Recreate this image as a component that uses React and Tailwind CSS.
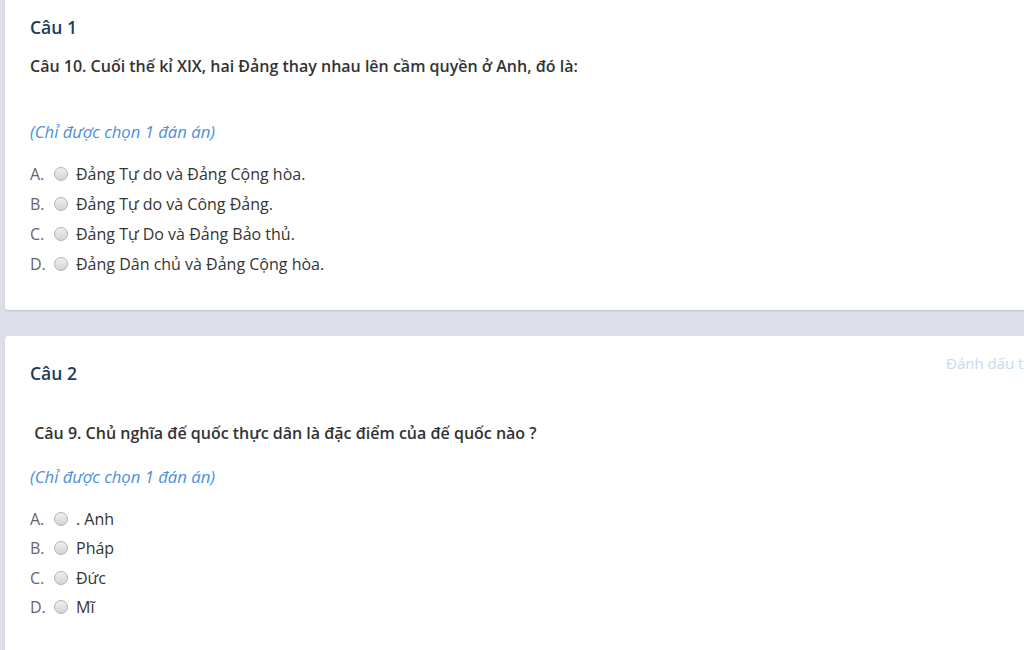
import React from 'react';

const questions = [
    {
        id: 1,
        title: 'Câu 1',
        text: 'Câu 10. Cuối thế kỉ XIX, hai Đảng thay nhau lên cầm quyền ở Anh, đó là:',
        options: [
            'Đảng Tự do và Đảng Cộng hòa.',
            'Đảng Tự do và Công Đảng.',
            'Đảng Tự Do và Đảng Bảo thủ.',
            'Đảng Dân chủ và Đảng Cộng hòa.',
        ],
    },
    {
        id: 2,
        title: 'Câu 2',
        text: '\u00a0Câu 9. Chủ nghĩa đế quốc thực dân là đặc điểm của đế quốc nào ?',
        options: ['. Anh', 'Pháp', 'Đức', 'Mĩ'],
        flag: true,
    },
];

const letters = ['A.', 'B.', 'C.', 'D.'];

const Radio = () => (
    <span className="inline-block w-[14px] h-[14px] rounded-full border border-[#b3b3b3] bg-gradient-to-b from-[#f0f0f0] to-[#d4d4d4] shrink-0" />
);

const Option = ({ letter, label, tall }) => (
    <div className={`flex items-center text-[16px] ${tall ? 'h-[30px]' : 'h-[29.5px]'}`}>
        <span className="w-[24px] text-[#666]">{letter}</span>
        <Radio />
        <span className="ml-[8px] text-[#353535]">{label}</span>
    </div>
);

const QuestionCard = ({ q, first }) => (
    <div
        className={`relative w-[1100px] bg-white shadow-[0_1px_2px_rgba(120,130,150,0.35)] pl-[25px] ${
            first ? 'pt-[14px] pb-[31px] rounded-b-[3px]' : 'pt-[24px] pb-[40px] rounded-[3px]'
        }`}
    >
        {q.flag && (
            <span className="absolute left-[941px] top-[16px] text-[15px] leading-[22px] text-[#c6daef]">
                Đánh dấu theo dõi
            </span>
        )}
        <div className="text-[17.5px] leading-[26px] font-semibold text-[#1e3a5c]">{q.title}</div>
        <div
            className={`text-[16px] leading-[22px] font-semibold text-[#333] ${first ? 'mt-[15px]' : 'mt-[36px]'}`}
        >
            {q.text}
        </div>
        <div
            className={`text-[16.7px] leading-[22px] italic text-[#4a8fe0] ${first ? 'mt-[44px]' : 'mt-[22px]'}`}
        >
            (Chỉ được chọn 1 đán án)
        </div>
        <div className="mt-[16px]">
            {q.options.map((o, i) => (
                <Option key={i} letter={letters[i]} label={o} tall={first} />
            ))}
        </div>
    </div>
);

export default function App() {
    return (
        <div className="w-[1024px] h-[650px] overflow-hidden bg-[#dde0e8] pl-[5px] font-['Open_Sans',sans-serif]">
            <QuestionCard q={questions[0]} first />
            <div className="h-[26px]" />
            <QuestionCard q={questions[1]} />
        </div>
    );
}
